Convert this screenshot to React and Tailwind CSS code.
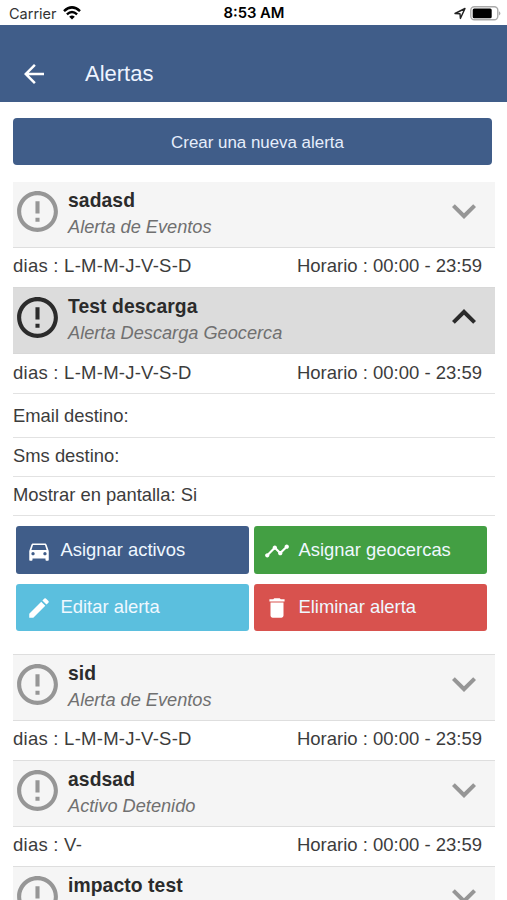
import { useState } from 'react'
import {
  MdArrowBack,
  MdDelete,
  MdDirectionsCar,
  MdErrorOutline,
  MdExpandLess,
  MdExpandMore,
  MdModeEdit,
  MdTimeline,
} from 'react-icons/md'

const ALERTS = [
  { id: 1, name: 'sadasd', type: 'Alerta de Eventos', days: 'L-M-M-J-V-S-D', hours: '00:00 - 23:59' },
  { id: 2, name: 'Test descarga', type: 'Alerta Descarga Geocerca', days: 'L-M-M-J-V-S-D', hours: '00:00 - 23:59' },
  { id: 3, name: 'sid', type: 'Alerta de Eventos', days: 'L-M-M-J-V-S-D', hours: '00:00 - 23:59' },
  { id: 4, name: 'asdsad', type: 'Activo Detenido', days: 'V-', hours: '00:00 - 23:59' },
  { id: 5, name: 'impacto test' },
]

const ACTIONS = [
  { label: 'Asignar activos', icon: MdDirectionsCar, color: 'bg-[#405d89]' },
  { label: 'Asignar geocercas', icon: MdTimeline, color: 'bg-[#439f43]' },
  { label: 'Editar alerta', icon: MdModeEdit, color: 'bg-[#5bbfde]' },
  { label: 'Eliminar alerta', icon: MdDelete, color: 'bg-[#d8524e]' },
]

export default function App() {
  const [openId, setOpenId] = useState(2)

  return (
    <div className="h-[900px] w-[507px] overflow-hidden bg-white font-['Liberation_Sans',Arial,sans-serif] text-[#3c3c3c]">
      <StatusBar />
      <header className="flex h-[77px] items-center bg-[#405d89] pt-[21px] pl-[19px] text-[#eef4ff]">
        <MdArrowBack className="size-[30px] text-white" />
        <h1 className="ml-[36px] text-[22px] leading-none">Alertas</h1>
      </header>
      <main className="pt-4 pr-3 pl-[13px]">
        <button className="mb-[17px] flex h-[46.6px] w-[479px] items-center justify-center rounded-[4px] bg-[#405d89] pt-[2px] pl-[10px] text-[16.9px] text-[#e6eefc]">
          Crear una nueva alerta
        </button>
        {ALERTS.map((a) => (
          <AlertItem
            key={a.id}
            alert={a}
            open={a.id === openId}
            onToggle={() => setOpenId(a.id === openId ? null : a.id)}
          />
        ))}
      </main>
    </div>
  )
}

function StatusBar() {
  return (
    <div className="grid h-[25px] grid-cols-3 items-center pt-[2px] text-black">
      <div className="flex items-center gap-[6px] pl-[9px] font-[Inter,sans-serif] text-[14.5px] text-[#333]">
        Carrier
        <svg className="mb-[2px] h-[14px] w-[18px]" viewBox="0 0 18 14">
          <path d="M1 5.1Q9-2.3 17 5.1" fill="none" stroke="#000" strokeWidth="2.5" />
          <path d="M3.9 8.3Q9 3.6 14.1 8.3" fill="none" stroke="#000" strokeWidth="2.4" />
          <path d="M6.2 10.7Q9 8.3 11.8 10.7L9 13.6Z" fill="#000" />
        </svg>
      </div>
      <div className="pl-px text-center font-[Inter,sans-serif] text-[14.8px] font-semibold">8:53 AM</div>
      <div className="flex items-center justify-end gap-[4px] pr-[6px]">
        <svg className="h-[13px] w-[12px]" viewBox="0 0 12 13">
          <path d="M1 6.5 11 1.5 6.4 11.4 6 6.7Z" fill="none" stroke="#222" strokeWidth="1.4" strokeLinejoin="round" />
        </svg>
        <svg className="h-[15px] w-[31px]" viewBox="0 0 31 15">
          <rect x=".8" y=".8" width="27" height="13" rx="3.5" fill="#fff" stroke="#aaa" strokeWidth="1.4" />
          <rect x="2.7" y="2.5" width="19" height="9.8" rx="1.5" fill="#000" />
          <path d="M29 5.3Q31.8 7.4 29 9.5Z" fill="#aaa" />
        </svg>
      </div>
    </div>
  )
}

function AlertItem({ alert, open, onToggle }) {
  const Chevron = open ? MdExpandLess : MdExpandMore
  return (
    <section className="group">
      <div
        onClick={onToggle}
        className={`flex h-[67.4px] items-start border-y pr-[7px] group-first-of-type:h-[66.6px] group-first-of-type:border-t-0 ${
          open ? 'border-[#d8d8d8] bg-[#dcdcdc]' : 'border-[#dedede] bg-[#f5f5f5]'
        }`}
      >
        <MdErrorOutline className={`mt-[5px] size-[49px] shrink-0 ${open ? 'text-[#2b2b2b]' : 'text-[#969696]'}`} />
        <div className="ml-[6px] flex-1 pt-[5px]">
          <h2 className="text-[19.3px] leading-[27px] font-bold tracking-[0.1px] text-[#2b2b2b]">{alert.name}</h2>
          {alert.type && <p className="text-[18.2px] leading-[27px] text-[#707070] italic">{alert.type}</p>}
        </div>
        <Chevron className={`mt-[5px] size-12 ${open ? 'text-[#2b2b2b]' : 'text-[#969696]'}`} />
      </div>
      {alert.days && (
        <div className="flex h-[38.9px] items-center justify-between pr-[13px] pb-[3px] text-[18.5px]">
          <span className="tracking-[0.25px]">dias : {alert.days}</span>
          <span>Horario : {alert.hours}</span>
        </div>
      )}
      {open && <AlertDetail />}
    </section>
  )
}

function AlertDetail() {
  return (
    <div className="text-[18.4px]">
      <p className="flex h-[44.6px] items-center border-y border-[#e2e2e2] pt-px">Email destino:</p>
      <p className="flex h-[39px] items-center border-b border-[#e2e2e2] pb-[2px]">Sms destino:</p>
      <p className="flex h-[39px] items-center border-b border-[#e2e2e2] pb-[2px]">Mostrar en pantalla: Si</p>
      <div className="mt-[10.4px] mb-[22.4px] ml-[3px] grid w-[471px] grid-cols-2 gap-x-[5px] gap-y-[9.4px]">
        {ACTIONS.map(({ label, icon: Icon, color }) => (
          <button key={label} className={`flex h-[47.8px] items-center rounded-[3px] pl-[10px] text-[18.4px] text-[#eff8ff] ${color}`}>
            <Icon className="mt-px size-[26px] text-white" />
            <span className="mb-px ml-[8.5px]">{label}</span>
          </button>
        ))}
      </div>
    </div>
  )
}
